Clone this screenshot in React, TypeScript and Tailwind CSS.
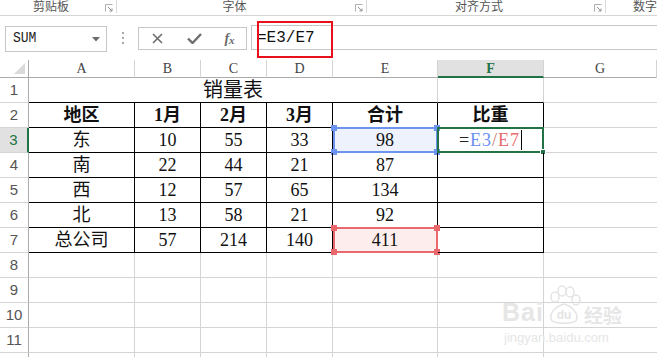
import React from 'react';

const serif = "font-['Liberation_Serif','Noto_Sans_CJK_SC',serif]";

const colLetters = ['A', 'B', 'C', 'D', 'E', 'F', 'G'];

const table: string[][] = [
  ['地区', '1月', '2月', '3月', '合计', '比重'],
  ['东', '10', '55', '33', '98', ''],
  ['南', '22', '44', '21', '87', ''],
  ['西', '12', '57', '65', '134', ''],
  ['北', '13', '58', '21', '92', ''],
  ['总公司', '57', '214', '140', '411', ''],
];

function Launcher() {
  return (
    <svg width="8" height="8" viewBox="0 0 8 8" className="mt-[4px]">
      <path d="M0.5 7.5V0.5H7.5" fill="none" stroke="#b0b0b0" strokeWidth="1" />
      <path d="M3 3L7 7M7 4.5V7H4.5" fill="none" stroke="#909090" strokeWidth="1" />
    </svg>
  );
}

function RibbonGroup({ label, width }: { label: string; width: string }) {
  return (
    <div className={`flex items-start ${width}`}>
      <div className="flex-1 text-center text-[12px] leading-[12px] mt-0 text-[#555]">{label}</div>
      <div className="w-[14px] flex justify-center">
        <Launcher />
      </div>
      <div className="w-px h-[13px] bg-[#dadada]" />
    </div>
  );
}

function Handles({ color }: { color: string }) {
  const pos = ['-top-[4px] -left-[4px]', '-top-[4px] -right-[4px]', '-bottom-[4px] -left-[4px]', '-bottom-[4px] -right-[4px]'];
  return (
    <>
      {pos.map((p) => (
        <div key={p} className={`absolute w-[6px] h-[6px] ${p} ${color}`} />
      ))}
    </>
  );
}

export default function App() {
  return (
    <div className="w-[657px] h-[357px] overflow-hidden bg-white relative font-['Noto_Sans_CJK_SC',sans-serif]">
      {/* ribbon group labels */}
      <div className="h-[16px] border-b border-[#d5d5d5] flex overflow-hidden">
        <RibbonGroup label="剪贴板" width="w-[117px]" />
        <RibbonGroup label="字体" width="w-[250px]" />
        <RibbonGroup label="对齐方式" width="w-[239px]" />
        <div className="flex-1 text-[12px] leading-[12px] text-[#555] pl-[27px] whitespace-nowrap">数字</div>
      </div>

      {/* formula bar */}
      <div className="h-[44px] flex items-start">
        <div className="ml-[5px] mt-[10px] w-[102px] h-[26px] border border-[#c6c6c6] flex items-center pl-[7px] pr-[6px]">
          <span className="flex-1 font-['Liberation_Mono',monospace] text-[13px] scale-y-[1.15] origin-left text-[#222]">SUM</span>
          <svg width="8" height="5" viewBox="0 0 8 5">
            <path d="M0 0H8L4 4.5Z" fill="#6b6b6b" />
          </svg>
        </div>
        <div className="w-[31px] mt-[16px] flex flex-col items-center gap-[3px]">
          <div className="w-[2px] h-[2px] bg-[#a8a8a8]" />
          <div className="w-[2px] h-[2px] bg-[#a8a8a8]" />
          <div className="w-[2px] h-[2px] bg-[#a8a8a8]" />
        </div>
        <div className="mt-[11px] w-[109px] h-[23px] border border-[#c6c6c6] flex items-center">
          <div className="w-[36px] flex justify-center">
            <svg width="11" height="11" viewBox="0 0 11 11">
              <path d="M1 1L10 10M10 1L1 10" stroke="#6e6e6e" strokeWidth="1.6" />
            </svg>
          </div>
          <div className="w-[38px] flex justify-center">
            <svg width="15" height="11" viewBox="0 0 15 11">
              <path d="M1 5.5L5.5 10L14 1" fill="none" stroke="#6e6e6e" strokeWidth="2.4" />
            </svg>
          </div>
          <div className="flex-1 flex justify-center font-['Liberation_Serif',serif] italic font-bold text-[14px] text-[#6a6a6a] leading-none">
            <span>f</span>
            <span className="text-[11px] mt-[3px]">x</span>
          </div>
        </div>
        <div className="ml-[4px] mt-[9px] flex-1 h-[25px] border-y border-l border-[#c6c6c6] flex items-center pl-[5px]">
          <span className="font-['Liberation_Mono',monospace] text-[16px] text-[#111]">=E3/E7</span>
        </div>
      </div>

      {/* red annotation box */}
      <div className="absolute left-[257px] top-[21px] w-[76px] h-[37px] border-2 border-[#e8101b]" />

      {/* grid */}
      <div className="grid grid-cols-[29px_106px_66px_66px_66px_105px_106px_1fr] grid-rows-[18px_repeat(11,25px)_25px] text-[#444]">
        {/* column headers */}
        <div className="border-r border-b border-[#ababab] relative">
          <svg width="11" height="11" viewBox="0 0 11 11" className="absolute right-[3px] bottom-[3px]">
            <path d="M11 0V11H0Z" fill="#dadada" />
          </svg>
        </div>
        {colLetters.map((c) =>
          c === 'F' ? (
            <div key={c} className="bg-[#e1e1e1] border-r border-[#d4d4d4] border-b-2 border-b-[#217346] flex items-center justify-center font-['Liberation_Serif',serif] font-bold text-[14px] text-[#217346]">
              {c}
            </div>
          ) : (
            <div key={c} className="border-r border-[#d4d4d4] border-b border-b-[#ababab] flex items-center justify-center font-['Liberation_Serif',serif] text-[14px] text-[#444]">
              {c}
            </div>
          )
        )}

        {/* row 1 */}
        <div className="border-r border-b border-r-[#ababab] border-b-[#d4d4d4] flex items-center justify-center font-['Liberation_Sans',sans-serif] text-[15px] text-[#555]">1</div>
        <div className={`col-span-5 border-r border-r-[#d4d4d4] border-b border-b-black flex items-center justify-center ${serif} text-[20px] text-[#111]`}>销量表</div>
        <div className="border-r border-r-[#d4d4d4] border-b border-b-black" />
        <div className="border-b border-[#d4d4d4]" />

        {/* table rows 2-7 */}
        {table.map((row, ri) => {
          const r = ri + 2;
          const active = r === 3;
          return (
            <React.Fragment key={r}>
              <div
                className={
                  active
                    ? 'bg-[#e1e1e1] border-b border-b-[#d4d4d4] border-r-2 border-r-[#217346] flex items-center justify-center font-["Liberation_Sans",sans-serif] text-[15px] text-[#217346]'
                    : 'border-b border-b-[#d4d4d4] border-r border-r-[#ababab] flex items-center justify-center font-["Liberation_Sans",sans-serif] text-[15px] text-[#555]'
                }
              >
                {r}
              </div>
              {row.map((v, ci) => {
                const isE3 = r === 3 && ci === 4;
                const isE7 = r === 7 && ci === 4;
                const isF3 = r === 3 && ci === 5;
                const bg = isE3 ? 'bg-[#edf2fc]' : isE7 ? 'bg-[#fdeded]' : '';
                return (
                  <div
                    key={ci}
                    className={`relative border-r border-b border-black flex items-center justify-center ${serif} text-[18px] text-[#111] ${r === 2 ? 'font-bold' : ''} ${bg}`}
                  >
                    {isF3 ? (
                      <>
                        <span className="text-[#222] tracking-[1px]">=</span>
                        <span className="text-[#6b8ff0] tracking-[1px]">E3</span>
                        <span className="text-[#c87878] tracking-[1px]">/</span>
                        <span className="text-[#ea6a6a] tracking-[1px]">E7</span>
                        <span className="w-px h-[20px] bg-black ml-[1px]" />
                        <div className="absolute -top-[1px] -left-[1px] -right-[1px] -bottom-[1px] border-2 border-[#217346]" />
                        <div className="absolute -right-[3px] -bottom-[3px] w-[6px] h-[6px] bg-[#217346] border border-white" />
                      </>
                    ) : (
                      v
                    )}
                    {isE3 && (
                      <div className="absolute -top-[1px] left-[0px] -right-[1px] -bottom-[1px] border-2 border-[#6c93ee]">
                        <Handles color="bg-[#6c93ee]" />
                      </div>
                    )}
                    {isE7 && (
                      <div className="absolute -top-[1px] left-[0px] -right-[1px] -bottom-[1px] border-2 border-[#e8686b]">
                        <Handles color="bg-[#e8686b]" />
                      </div>
                    )}
                  </div>
                );
              })}
              <div className="border-b border-[#d4d4d4]" />
            </React.Fragment>
          );
        })}

        {/* empty rows 8-12 */}
        {[8, 9, 10, 11, 12].map((r) => (
          <React.Fragment key={r}>
            <div className="border-b border-b-[#d4d4d4] border-r border-r-[#ababab] flex items-center justify-center font-['Liberation_Sans',sans-serif] text-[15px] text-[#555]">
              {r}
            </div>
            {[0, 1, 2, 3, 4, 5].map((c) => (
              <div key={c} className="border-r border-b border-[#d4d4d4]" />
            ))}
            <div className="border-b border-[#d4d4d4]" />
          </React.Fragment>
        ))}
      </div>

      {/* baidu watermark */}
      <div className="absolute left-[502px] top-[285px] text-[#e6e6e6] pointer-events-none">
        <div className="flex items-end">
          <span className="font-['Liberation_Sans',sans-serif] font-bold text-[25px] leading-none tracking-[1px]">Bai</span>
          <svg width="36" height="40" viewBox="0 0 36 40" className="mx-[2px]">
            <g fill="none" stroke="#e4e4e4" strokeWidth="1.5">
              <ellipse cx="9" cy="12" rx="4" ry="5" />
              <ellipse cx="16" cy="6" rx="4" ry="5" />
              <ellipse cx="24" cy="7" rx="4" ry="5" />
              <ellipse cx="30" cy="15" rx="4" ry="5" />
              <path d="M6 36C2 30 8 22 18 19C28 22 33 30 30 36C24 39 12 39 6 36Z" />
            </g>
            <text x="18" y="34" textAnchor="middle" fontSize="12" fontFamily="Liberation Sans" fontWeight="bold" fill="#e4e4e4">du</text>
          </svg>
          <span className="font-['Noto_Sans_CJK_SC',sans-serif] font-bold text-[19px] leading-none mb-[1px]">经验</span>
        </div>
        <div className="font-['Liberation_Sans',sans-serif] text-[13px] leading-none mt-[6px] ml-[2px]">jingyan.baidu.com</div>
      </div>
    </div>
  );
}
